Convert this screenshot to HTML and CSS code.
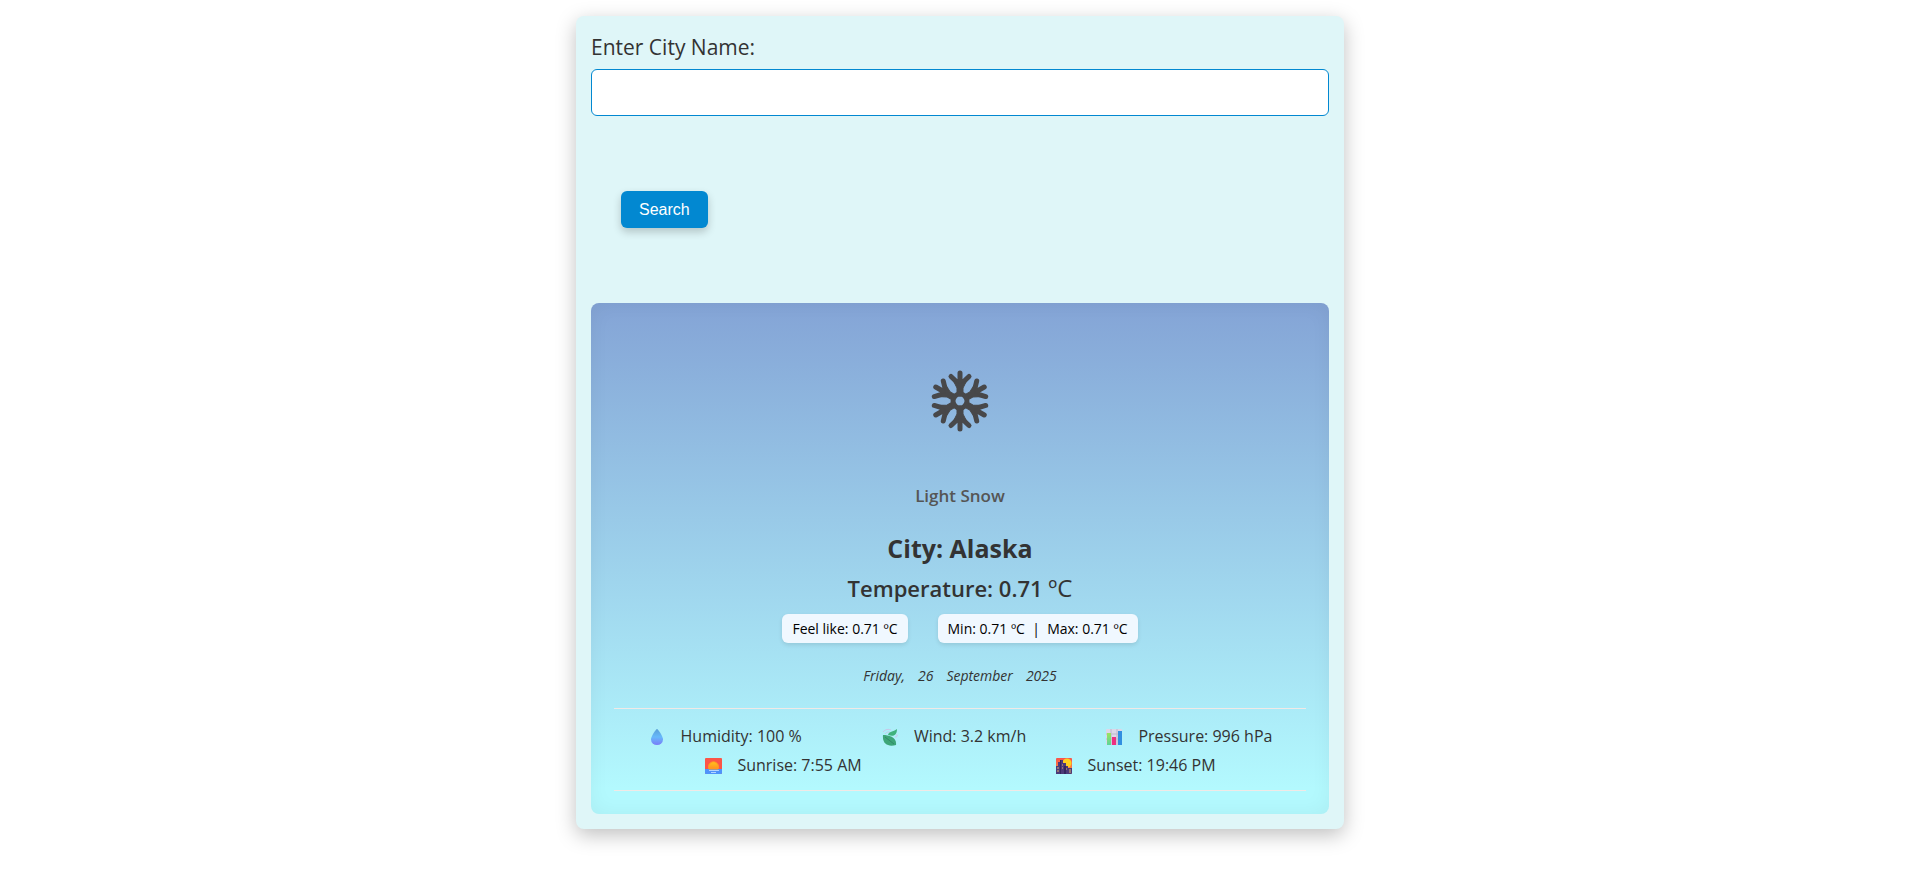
FILE: index.html
```html
<!DOCTYPE html>
<html lang="en">
<head>
<meta charset="utf-8">
<title>Weather</title>
<link rel="stylesheet" href="styles.css">
</head>
<body>
<main class="card">
  <form class="search">
    <label class="search-label" for="city">Enter City Name:</label>
    <input class="search-input" id="city" type="text">
    <button class="search-button" type="button">Search</button>
  </form>
  <section class="weather">
    <svg class="snow" viewBox="0 0 58 62" aria-hidden="true">
      <defs>
        <g id="arm">
          <path d="M29 24V3M20 6.500L29 15L38 6.500" fill="none" stroke="#48484a" stroke-width="5" stroke-linecap="round"/>
          <path d="M22 10L29 14L36 10L32 18V24H26V18Z" fill="#48484a" stroke="#48484a" stroke-width="1"/>
        </g>
      </defs>
      <use href="#arm"/>
      <use href="#arm" transform="rotate(60 29 31)"/>
      <use href="#arm" transform="rotate(120 29 31)"/>
      <use href="#arm" transform="rotate(180 29 31)"/>
      <use href="#arm" transform="rotate(240 29 31)"/>
      <use href="#arm" transform="rotate(300 29 31)"/>
      <circle cx="29" cy="31" r="7" fill="none" stroke="#48484a" stroke-width="5"/>
    </svg>
    <p class="condition">Light Snow</p>
    <h1 class="city">City: Alaska</h1>
    <h2 class="temperature">Temperature: 0.71 <span class="unit">ºC</span></h2>
    <div class="pills">
      <span class="pill">Feel like: 0.71 ºC</span>
      <span class="pill">Min: 0.71 ºC &nbsp;|&nbsp; Max: 0.71 ºC</span>
    </div>
    <p class="date"><span>Friday,</span><span>26</span><span>September</span><span>2025</span></p>
    <ul class="details">
      <li class="detail">
        <svg class="icon" viewBox="0 0 18 18" aria-hidden="true">
          <defs><linearGradient id="drop" x1="0" y1="0" x2="0" y2="1"><stop offset="0" stop-color="#5a9fd8"/><stop offset=".5" stop-color="#67b9fb"/><stop offset="1" stop-color="#7a7cf8"/></linearGradient></defs>
          <path d="M9 1C10 1 15 8 15 11.500A6 5.500 0 0 1 3 11.500C3 8 8 1 9 1Z" fill="url(#drop)"/>
        </svg>
        <span>Humidity: 100 %</span>
      </li>
      <li class="detail">
        <svg class="icon" viewBox="0 0 18 18" aria-hidden="true">
          <path d="M2 4C4 1 8 1 10 2M4 6C6 3 9 4 10 5M14 9C17 9 17 6 15 7" fill="none" stroke="#c9c6e8" stroke-width="1"/>
          <path d="M16 1C16 7 13 9 7 7C8 3 12 4 16 1Z" fill="#3fb27c"/>
          <path d="M2 7C8 7 16 9 15 17C8 19 1 17 2 7Z" fill="#3da578"/>
          <path d="M4 9L13 16" fill="none" stroke="#318a68" stroke-width="1"/>
        </svg>
        <span>Wind: 3.2 km/h</span>
      </li>
      <li class="detail">
        <svg class="icon" viewBox="0 0 18 18" aria-hidden="true">
          <defs><linearGradient id="green" x1="0" y1="0" x2="0" y2="1"><stop offset="0" stop-color="#9be45c"/><stop offset="1" stop-color="#5bd39b"/></linearGradient></defs>
          <rect x="1" y="1" width="16" height="16" rx="1" fill="#ddd7e8"/>
          <path d="M1 6H17M1 11H17M6 1V17M12 1V17" stroke="#bdb8cb" stroke-width="1"/>
          <rect x="2" y="5" width="4" height="12" fill="url(#green)"/>
          <rect x="7" y="9" width="4" height="8" fill="#ed2f80"/>
          <rect x="13" y="3" width="4" height="14" fill="#318fe0"/>
        </svg>
        <span>Pressure: 996 hPa</span>
      </li>
      <li class="detail">
        <svg class="icon" viewBox="0 0 18 18" aria-hidden="true">
          <defs><linearGradient id="sun" x1="0" y1="0" x2="0" y2="1"><stop offset="0" stop-color="#ffc21c"/><stop offset="1" stop-color="#ff9020"/></linearGradient></defs>
          <rect x="1" y="1" width="17" height="16" rx="1" fill="#fb5548"/>
          <path d="M1 12H18V16Q18 17 17 17H2Q1 17 1 16Z" fill="#4f93fa"/>
          <path d="M5 12A5 5 0 1 1 14 12Z" fill="url(#sun)" stroke="#ff9a26" stroke-width="1"/>
          <path d="M5 13.500H15M7 15.500H12" stroke="#b5d5ff" stroke-width="1"/>
        </svg>
        <span>Sunrise: 7:55 AM</span>
      </li>
      <li class="detail">
        <svg class="icon" viewBox="0 0 18 18" aria-hidden="true">
          <defs><linearGradient id="dusk" x1="0" y1="0" x2="0" y2="1"><stop offset="0" stop-color="#f8524c"/><stop offset="1" stop-color="#ff9d3c"/></linearGradient></defs>
          <rect x="1" y="1" width="16" height="16" rx="1" fill="url(#dusk)"/>
          <circle cx="12" cy="6" r="4.500" fill="#ffcf1f"/>
          <path d="M1 9H3V5H5V3H8V6H11V9H13V11H17V16Q17 17 16 17H1Z" fill="#4c3a78"/>
          <path d="M5 3H6V17H5ZM9 9H11V17H9Z" fill="#34265e"/>
          <path d="M2 11H4M2 14H4M7 8H8M7 11H8M11 12H12M14 13H16M14 15H16" stroke="#e0b06c" stroke-width="1"/>
        </svg>
        <span>Sunset: 19:46 PM</span>
      </li>
    </ul>
  </section>
</main>
</body>
</html>
```
FILE: styles.css
```css
* {
  box-sizing: border-box;
}

body {
  min-height: 100vh;
  margin: 0;
  padding: 16px 0;
  background: #fff;
  color: #333;
  font-family: "Segoe UI", "Open Sans", "Noto Sans", sans-serif;
}

.card {
  width: 40%;
  margin: 0 auto;
  padding: 15px;
  border-radius: 8px;
  background: #dff6f8;
  box-shadow: 0 6px 20px rgba(0, 0, 0, 0.25);
}

.search {
  display: flex;
  flex-direction: column;
  align-items: flex-start;
}

.search-label {
  margin-bottom: 6px;
  font-size: 21px;
  line-height: 32px;
}

.search-input {
  width: 100%;
  height: 47px;
  padding: 10px;
  border: 1px solid #0288d1;
  border-radius: 6px;
  background: #fff;
  font-size: 16px;
}

.search-button {
  height: 37px;
  margin: 75px 30px;
  padding: 0 18px;
  border: 0;
  border-radius: 6px;
  background: #0288d1;
  box-shadow: 0 4px 8px rgba(0, 0, 0, 0.2);
  color: #fff;
  font-family: "Liberation Sans", Arial, sans-serif;
  font-size: 16px;
}

.weather {
  display: flex;
  flex-direction: column;
  align-items: center;
  padding: 66px 23px 23px;
  border-radius: 8px;
  background: linear-gradient(#84a4d6, #b3f9fe 95%);
  box-shadow: inset 0 0 20px rgba(0, 0, 0, 0.05);
}

.snow {
  width: 58px;
  height: 64px;
}

.condition {
  margin: 50px 0 20px;
  color: #555;
  font-size: 17px;
  font-weight: 600;
  line-height: 26px;
}

.city {
  margin: 0;
  font-size: 25px;
  font-weight: 700;
  line-height: 39px;
}

.temperature {
  margin: 0;
  font-size: 22px;
  font-weight: 600;
  line-height: 40px;
}

.unit {
  font-size: 24px;
  font-weight: 400;
}

.pills {
  display: flex;
  gap: 30px;
  margin-top: 6px;
}

.pill {
  padding: 0 10px;
  border-radius: 6px;
  background: #f0f8ff;
  box-shadow: 0 2px 4px rgba(0, 0, 0, 0.1);
  color: #000;
  font-size: 14px;
  line-height: 29px;
}

.date {
  display: flex;
  gap: 13px;
  margin: 21px 0;
  font-size: 14px;
  font-style: italic;
  line-height: 23px;
}

.details {
  display: flex;
  flex-wrap: wrap;
  justify-content: space-around;
  align-self: stretch;
  column-gap: 30px;
  margin: 0;
  padding: 13px 9px 10px;
  border-top: 1px solid #f1e9e6;
  border-bottom: 1px solid #f1e9e6;
  list-style: none;
}

.detail {
  display: flex;
  align-items: center;
  gap: 15px;
  font-size: 16px;
  line-height: 29px;
}

.icon {
  width: 18px;
  height: 18px;
}
```
